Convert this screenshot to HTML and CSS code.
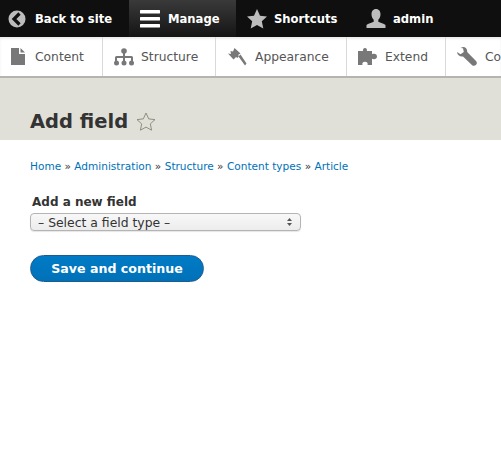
FILE: index.html
```html
<!DOCTYPE html>
<html lang="en">
<head>
    <meta charset="UTF-8">
    <meta name="viewport" content="width=device-width, initial-scale=1.0">
    <title>Add field</title>
    <link rel="stylesheet" href="styles.css">
</head>
<body>
    <!-- Toolbar -->
    <nav class="toolbar">
        <a class="bar-item back">
            <svg class="bar-icon" width="26" height="20" viewBox="0 0 26 20"><circle cx="17" cy="10" r="8.5" fill="#bdbdbd"/><path d="M19.5 4.5 L14 10 L19.5 15.500" fill="none" stroke="#111" stroke-width="3.2"/></svg>
            Back to site
        </a>
        <a class="bar-item manage">
            <svg class="bar-icon" width="20" height="20" viewBox="0 0 20 20"><path d="M1 1h18a1 1 0 0 1 0 3.500H1a1 1 0 0 1 0-3.500zM1 8h18a1 1 0 0 1 0 3.500H1a1 1 0 0 1 0-3.500zM1 15h18a1 1 0 0 1 0 3.500H1a1 1 0 0 1 0-3.500z" fill="#fff"/></svg>
            Manage
        </a>
        <a class="bar-item shortcuts">
            <svg class="bar-icon" width="20" height="20" viewBox="0 0 20 20"><path d="M10 0l3 6.700 7 .8-5.200 4.800 1.500 7.200L10 16l-6.300 3.500 1.500-7.200L0 7.500l7-.8z" fill="#bdbdbd"/></svg>
            Shortcuts
        </a>
        <a class="bar-item user">
            <svg class="bar-icon" width="20" height="20" viewBox="0 0 20 20"><path d="M10 0c3 0 4.500 2.300 4.500 5.200 0 2.300-1 4.400-2.200 5.500v2c2 .9 5.700 1.700 7.200 3.300V19H.5v-3c1.500-1.600 5.200-2.400 7.200-3.300v-2C6.500 9.600 5.500 7.500 5.500 5.200 5.500 2.300 7 0 10 0z" fill="#bdbdbd"/></svg>
            admin
        </a>
    </nav>

    <!-- Tray -->
    <nav class="tray">
        <a class="tray-item content">
            <svg class="tray-icon" width="14" height="17" viewBox="0 0 14 17"><path d="M0 0h8v6h6v11H0zM9.500 0L14 4.500H9.500z" fill="#787878"/></svg>
            Content
        </a>
        <a class="tray-item structure">
            <svg class="tray-icon" width="20" height="18" viewBox="0 0 20 18"><g fill="#787878"><circle cx="10" cy="3" r="2.800"/><circle cx="2.500" cy="15" r="2.500"/><circle cx="10" cy="15" r="2.500"/><circle cx="17.500" cy="15" r="2.500"/><path d="M9 4h2v4h6.500a1.500 1.500 0 0 1 1.500 1.500V14h-2v-4h-6v4H9v-4H3v4H1V9.500A1.500 1.500 0 0 1 2.500 8H9z"/></g></svg>
            Structure
        </a>
        <a class="tray-item appearance">
            <svg class="tray-icon" width="19" height="18" viewBox="0 0 19 18"><path d="M6.500 0L12.500 5.500 10 7 11 8 9.500 10 8 9 5.500 11.500 0 5.500l3 .5-.5-3 2.500.5z" fill="#787878"/><path d="M10.500 8.500L12.500 6.500 18.500 15.500 17 17.500z" fill="#787878"/></svg>
            Appearance
        </a>
        <a class="tray-item extend">
            <svg class="tray-icon" width="19" height="17" viewBox="0 0 19 17"><path d="M0 3h5.200C4.500 1.500 5.500 0 7 0s2.500 1.500 1.800 3H14v3.200c1.500-.8 5-.8 5 2.300s-3.500 3-5 2.300V17H9.500c.7-1.500-.3-3.200-2.500-3.200S3.800 15.500 4.500 17H0z" fill="#787878"/></svg>
            Extend
        </a>
        <a class="tray-item config">
            <svg class="tray-icon" width="20" height="20" viewBox="0 0 20 20"><path d="M6 0c2.800 0 4.500 2.200 4.200 5l8.800 9c1.300 1.500 1 3-.1 4s-2.700 1.200-4-.1L6 9.500C3 10 .4 8.200 0 5l3.500 2.200L6.800 5 6 1.200 3.500 1z" fill="#787878"/></svg>
            Configuration
        </a>
    </nav>

    <!-- Page title -->
    <header class="page-head">
        <h1>Add field</h1>
        <svg class="title-star" width="20" height="19" viewBox="0 0 20 19"><path d="M10 1l2.700 5.900 6.300.7-4.700 4.300 1.300 6.300L10 15.100l-5.600 3.100 1.300-6.300L1 7.600l6.300-.7z" fill="none" stroke="#8e8e7e" stroke-width="1"/></svg>
    </header>

    <main class="main">
        <div class="breadcrumb">
            <a>Home</a> » <a>Administration</a> » <a>Structure</a> » <a>Content types</a> » <a>Article</a>
        </div>

        <form class="form">
            <label class="field-label" for="fieldType">Add a new field</label>
            <div class="select" id="fieldType">
                <span>– Select a field type –</span>
                <svg width="5" height="8" viewBox="0 0 5 8"><path d="M2.500 0L5 3H0zM2.500 8L0 5h5z" fill="#555"/></svg>
            </div>
            <button type="button" class="btn">Save and continue</button>
        </form>
    </main>
</body>
</html>
```

FILE: styles.css
```css
html, body {
    margin: 0;
    height: 100%;
    overflow: hidden;
}
body {
    font-family: "DejaVu Sans", sans-serif;
    background: white;
    color: #333;
}
.toolbar {
    display: flex;
    height: 37px;
    background: #0f0f0f;
    white-space: nowrap;
}
.bar-item {
    display: flex;
    align-items: center;
    color: white;
    font-size: 11.600px;
    font-weight: bold;
}
.bar-icon {
    flex: none;
    margin-right: 7px;
}
.back {
    width: 129px;
}
.back .bar-icon {
    margin-right: 9px;
}
.manage {
    width: 107px;
    padding-left: 11px;
    box-sizing: border-box;
    background: linear-gradient(#3a3a3a, #141414);
}
.manage .bar-icon {
    margin-right: 8px;
}
.shortcuts {
    width: 129px;
    padding-left: 11px;
    box-sizing: border-box;
}
.user {
    padding-left: 1px;
}
.tray {
    display: flex;
    height: 39px;
    background: white;
    border-bottom: 2px solid #b5b5ad;
    box-shadow: inset 0 2px 2px rgba(0,0,0,0.08);
    white-space: nowrap;
    overflow: hidden;
}
.tray-item {
    display: flex;
    align-items: center;
    flex: none;
    box-sizing: border-box;
    border-right: 1px solid #d9d9d9;
    color: #565656;
    font-size: 12.300px;
}
.tray-icon {
    flex: none;
    margin-right: 8px;
}
.content {
    width: 103px;
    padding-left: 11px;
}
.content .tray-icon {
    margin-right: 10px;
}
.structure {
    width: 113px;
    padding-left: 11px;
}
.structure .tray-icon {
    margin-right: 7px;
}
.appearance {
    width: 131px;
    padding-left: 12px;
}
.extend {
    width: 99px;
    padding-left: 11px;
}
.config {
    padding-left: 11px;
    border-right: 0;
}
.page-head {
    display: flex;
    align-items: center;
    height: 62px;
    padding: 24px 0 0 30px;
    box-sizing: border-box;
    background: #e0e0d8;
}
h1 {
    margin: 0 8px 0 0;
    font-size: 19.500px;
    font-weight: bold;
    color: #333;
}
.main {
    padding: 19px 30px 0;
}
.breadcrumb {
    font-size: 10.550px;
    line-height: 14px;
    color: #333;
}
.breadcrumb a {
    color: #0071b8;
}
.form {
    margin-top: 22px;
}
.field-label {
    display: block;
    margin-left: 2px;
    font-size: 12px;
    font-weight: bold;
    line-height: 14px;
    color: #333;
}
.select {
    display: flex;
    justify-content: space-between;
    align-items: center;
    width: 271px;
    height: 18px;
    margin-top: 4px;
    padding: 0 8px 0 7px;
    box-sizing: border-box;
    border: 1px solid #b4b4b4;
    border-radius: 4px;
    background: linear-gradient(#f8f8f8, #ececec);
    box-shadow: 0 1px 1px rgba(0,0,0,0.1);
    font-size: 12.400px;
    color: #333;
}
.btn {
    display: block;
    width: 174px;
    height: 27px;
    margin-top: 24px;
    padding: 0;
    border: 1px solid #1e5c90;
    border-radius: 14px;
    background: linear-gradient(#007bc6, #0071b8);
    color: white;
    font-family: "DejaVu Sans", sans-serif;
    font-size: 12.600px;
    font-weight: bold;
}
```
